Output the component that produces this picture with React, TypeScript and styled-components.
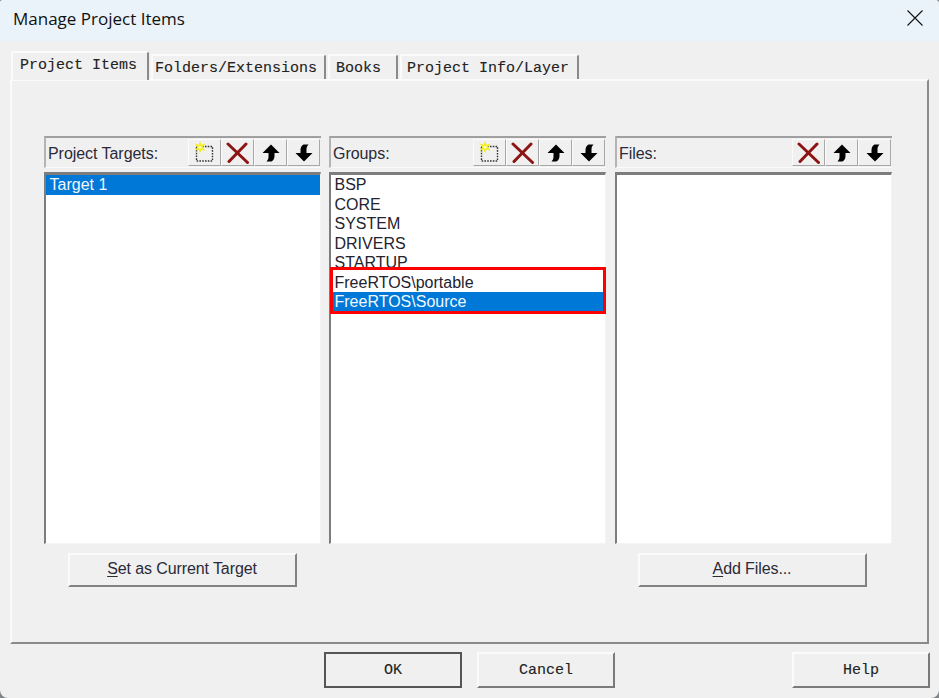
import React from "react";
import styled, { createGlobalStyle } from "styled-components";

const Global = createGlobalStyle`
  html, body { margin: 0; padding: 0; background: #7f8588; }
  #root { width: 939px; height: 698px; }
`;

const Win = styled.div`
  width: 939px;
  height: 698px;
  display: flex;
  flex-direction: column;
  background: #f0f0f0;
  border-radius: 3px 4px 8px 8px;
  overflow: hidden;
  box-sizing: border-box;
`;
const TitleBar = styled.div`
  height: 41px;
  flex: none;
  background: #eaf3f9;
  display: flex;
  align-items: center;
  justify-content: space-between;
  padding: 0 16px 5px 13px;
  box-sizing: border-box;
  font: 17px "Open Sans", "Noto Sans", sans-serif;
  color: #111;
`;
const Close = styled.svg`
  width: 16px;
  height: 16px;
`;
const Tabs = styled.div`
  display: flex;
  align-items: flex-end;
  height: 38px;
  padding-left: 11px;
  flex: none;
  position: relative;
  z-index: 1;
`;
const Tab = styled.div<{ $w: number; $pad: number; $active?: boolean }>`
  width: ${(p) => p.$w}px;
  height: ${(p) => (p.$active ? 29 : 25)}px;
  margin-right: 2px;
  margin-bottom: ${(p) => (p.$active ? -1 : 0)}px;
  box-sizing: border-box;
  background: #f0f0f0;
  border-top: 2px solid #fbfbfb;
  border-left: 2px solid #fbfbfb;
  border-right: 2px solid #8a8a8a;
  border-radius: 2px 3px 0 0;
  font: 15px/25px "Liberation Mono", monospace;
  -webkit-text-stroke: 0.12px #222;
  color: #222;
  padding-left: ${(p) => p.$pad}px;
  white-space: pre;
`;
const Panel = styled.div`
  width: 919px;
  height: 565px;
  flex: none;
  margin-left: 10px;
  box-sizing: border-box;
  border-top: 2px solid #fbfbfb;
  border-left: 2px solid #fbfbfb;
  border-right: 2px solid #8a8a8a;
  border-bottom: 2px solid #8a8a8a;
  padding: 55px 0 0 32px;
`;
const Columns = styled.div`
  display: grid;
  grid-template-columns: 277px 278px 277px;
  column-gap: 8px;
`;
const Column = styled.div`
  display: flex;
  flex-direction: column;
  width: 277px;
`;
const Header = styled.div`
  height: 32px;
  box-sizing: border-box;
  border-top: 2px solid #a0a0a0;
  border-left: 2px solid #b4b4b4;
  border-bottom: 1px solid #fbfbfb;
  display: flex;
  align-items: flex-start;
  padding: 1px 1px 0 0;
`;
const HeaderLabel = styled.div`
  flex: 1;
  font: 16px/29px "Liberation Sans", Arial, sans-serif;
  color: #2a2a38;
  padding-left: 2px;
  letter-spacing: -0.05px;
`;
const ToolBtn = styled.div`
  width: 33px;
  height: 27px;
  box-sizing: border-box;
  border-left: 1px solid #fbfbfb;
  border-top: 1px solid #fbfbfb;
  border-right: 1px solid #a8a8a8;
  border-bottom: 1px solid #a8a8a8;
  display: flex;
  align-items: center;
  justify-content: center;
`;
const List = styled.div`
  position: relative;
  margin-top: 4px;
  height: 372px;
  box-sizing: border-box;
  background: #fff;
  border-top: 3px solid #7d7d7d;
  border-left: 2px solid #7d7d7d;
  border-right: 1px solid #f4f4f4;
  border-bottom: 1px solid #f4f4f4;
`;
const Row = styled.div<{ $sel?: boolean }>`
  height: 19.5px;
  font: 16px/20px "Liberation Sans", Arial, sans-serif;
  padding-left: 3.5px;
  color: ${(p) => (p.$sel ? "#f2f8fd" : "#23232f")};
  background: ${(p) => (p.$sel ? "#0078d7" : "transparent")};
  white-space: pre;
`;
const Highlight = styled.div`
  position: absolute;
  left: -1px;
  top: 92px;
  width: 276px;
  height: 47px;
  box-sizing: border-box;
  border: 3px solid #f00;
  pointer-events: none;
`;
const ActionRow = styled.div`
  display: grid;
  grid-template-columns: 277px 278px 277px;
  column-gap: 8px;
  margin-top: 9px;
`;
const ActionCell = styled.div<{ $inset: number }>`
  padding-left: ${(p) => p.$inset}px;
  min-height: 34px;
`;
const RaisedBtn = styled.div`
  width: 229px;
  height: 34px;
  box-sizing: border-box;
  background: #f0f0f0;
  border-top: 2px solid #fbfbfb;
  border-left: 2px solid #fbfbfb;
  border-right: 2px solid #828282;
  border-bottom: 2px solid #828282;
  padding-right: 1px;
  text-align: center;
  font: 16px/28px "Liberation Sans", Arial, sans-serif;
  color: #2a2a38;
  letter-spacing: -0.1px;
  u { text-underline-offset: 2px; }
`;
const Footer = styled.div`
  display: flex;
  padding: 8px 0 0 324px;
`;
const FootBtn = styled.div<{ $def?: boolean; $gap?: number }>`
  width: 138px;
  height: 36px;
  margin-right: ${(p) => p.$gap ?? 0}px;
  box-sizing: border-box;
  background: #f0f0f0;
  border-top: 2px solid ${(p) => (p.$def ? "#555" : "#fbfbfb")};
  border-left: 2px solid ${(p) => (p.$def ? "#555" : "#fbfbfb")};
  border-right: 2px solid ${(p) => (p.$def ? "#555" : "#7a7a7a")};
  border-bottom: 2px solid ${(p) => (p.$def ? "#555" : "#7a7a7a")};
  text-align: center;
  font: 15px/34px "Liberation Mono", monospace;
  -webkit-text-stroke: 0.12px #222;
  color: #222;
`;

const NewIcon = () => (
  <svg width="24" height="24" viewBox="0 0 24 24">
    <rect x="3.5" y="5.5" width="16" height="14.5" fill="none" stroke="#333" strokeWidth="1.4" strokeDasharray="1.6 1.2" />
    <path d="M7 0l1.400 3.800 4.100-1.300-2.700 3.700 2.700 3.700-4.100-1.300L7 12.500 5.600 8.600l-4.100 1.300 2.700-3.700-2.700-3.700 4.100 1.300z" fill="#f4ec1c" />
    <circle cx="7" cy="6.200" r="1.600" fill="#fdfbb0" />
  </svg>
);
const XIcon = () => (
  <svg width="24" height="24" viewBox="0 0 24 24">
    <path d="M2 3l19.500 18.500M20 3L3 20.500" stroke="#8e1414" strokeWidth="3" fill="none" strokeLinecap="round" />
  </svg>
);
const UpIcon = () => (
  <svg width="20" height="20" viewBox="0 0 20 20">
    <path d="M10 1.500L18.500 10H13.500V13C13.500 15.500 12.500 17.500 10.500 18.500H5.500C7 17 7.500 15.500 7.500 13.500V10H1.500z" fill="#000" />
  </svg>
);
const DownIcon = () => (
  <svg width="20" height="20" viewBox="0 0 20 20">
    <path d="M10 18.500L1.500 10H6.500V7C6.500 4.500 7.500 2.500 9.500 1.500H14.500C13 3 12.500 4.500 12.500 6.500V10H18.500z" fill="#000" />
  </svg>
);

const Tools = ({ add }: { add?: boolean }) => (
  <>
    {add && (
      <ToolBtn>
        <NewIcon />
      </ToolBtn>
    )}
    <ToolBtn>
      <XIcon />
    </ToolBtn>
    <ToolBtn>
      <UpIcon />
    </ToolBtn>
    <ToolBtn>
      <DownIcon />
    </ToolBtn>
  </>
);

export default function App() {
  return (
    <>
      <Global />
      <Win>
        <TitleBar>
          <span>Manage Project Items</span>
          <Close viewBox="0 0 16 16">
            <path d="M.5.5l15 15M15.500.5l-15 15" stroke="#111" strokeWidth="1.100" fill="none" />
          </Close>
        </TitleBar>
        <Tabs>
          <Tab $w={138} $pad={7} $active>Project Items</Tab>
          <Tab $w={175} $pad={2}>Folders/Extensions</Tab>
          <Tab $w={70} $pad={6}>Books</Tab>
          <Tab $w={179} $pad={5}>Project Info/Layer</Tab>
        </Tabs>
        <Panel>
          <Columns>
            <Column>
              <Header>
                <HeaderLabel>Project Targets:</HeaderLabel>
                <Tools add />
              </Header>
              <List>
                <Row $sel>Target 1</Row>
              </List>
            </Column>
            <Column>
              <Header>
                <HeaderLabel>Groups:</HeaderLabel>
                <Tools add />
              </Header>
              <List>
                <Row>BSP</Row>
                <Row>CORE</Row>
                <Row>SYSTEM</Row>
                <Row>DRIVERS</Row>
                <Row>STARTUP</Row>
                <Row>FreeRTOS\portable</Row>
                <Row $sel>FreeRTOS\Source</Row>
                <Highlight />
              </List>
            </Column>
            <Column>
              <Header>
                <HeaderLabel>Files:</HeaderLabel>
                <Tools />
              </Header>
              <List />
            </Column>
          </Columns>
          <ActionRow>
            <ActionCell $inset={24}>
              <RaisedBtn><u>S</u>et as Current Target</RaisedBtn>
            </ActionCell>
            <ActionCell $inset={0} />
            <ActionCell $inset={23}>
              <RaisedBtn><u>A</u>dd Files...</RaisedBtn>
            </ActionCell>
          </ActionRow>
        </Panel>
        <Footer>
          <FootBtn $def $gap={15}>OK</FootBtn>
          <FootBtn $gap={177}>Cancel</FootBtn>
          <FootBtn>Help</FootBtn>
        </Footer>
      </Win>
    </>
  );
}
